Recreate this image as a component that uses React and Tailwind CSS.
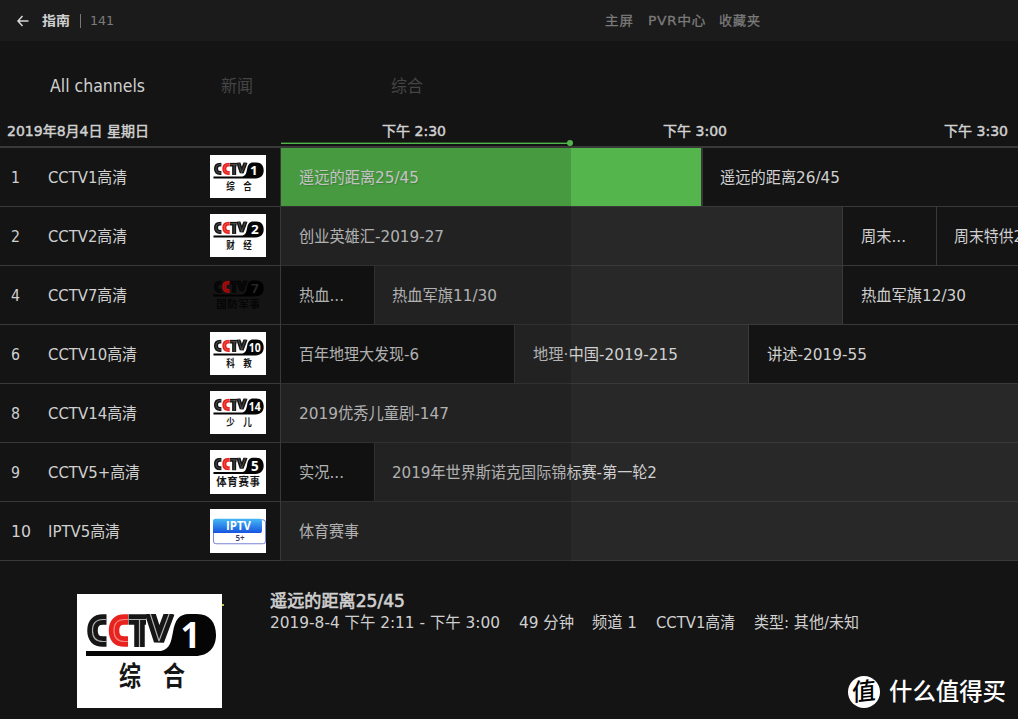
import { useLayoutEffect, useRef } from 'react';

// Text squeezed or stretched horizontally to a fixed advance width.
function Fit({ w, className = '', children }) {
  const ref = useRef(null);
  useLayoutEffect(() => {
    const el = ref.current;
    el.style.transform = `scaleX(${w / el.getBoundingClientRect().width})`;
  }, [w]);
  return (
    <span className={`block shrink-0 whitespace-nowrap ${className}`} style={{ width: w }}>
      <span ref={ref} className="inline-block origin-left">{children}</span>
    </span>
  );
}

function CctvLogo({ num, label, dark, big, className }) {
  const wide = label.length > 2;
  const two = num.length > 1;
  const ink = dark ? '#050505' : '#161616';
  const gap = dark ? '#141414' : big ? '#b0b0b0' : '#8a8a8a';
  const red = dark ? '#a80c0c' : '#e8231f';
  const c1 = 'M29.500 25.500H26Q15.500 25.500 15.500 36.500T26 47.500H29.500';
  const c2 = 'M51 25.500H47.500Q37 25.500 37 36.500T47.500 47.500H51';
  const tv = 'M51.500 25.500H69M62.500 25.500V53M73 19L82 47L92.500 19';
  return (
    <svg viewBox="0 0 145 114" preserveAspectRatio="none" className={className}>
      <defs>
        <clipPath id="letters"><rect x="8" y="20" width="90" height="33" /></clipPath>
      </defs>
      {!dark && <rect width="145" height="114" fill="#fff" />}
      <g clipPath="url(#letters)" fill="none" strokeWidth="10.500" strokeLinejoin="bevel">
        <path d={c1} stroke={ink} />
        <path d={tv} stroke={ink} />
        <path d={c2} stroke={red} />
        <g strokeWidth="1.200">
          <path d={c1} stroke={gap} />
          <path d={tv} stroke={gap} />
          <path d={c2} stroke={dark ? '#5c0808' : '#f58480'} />
        </g>
      </g>
      <path d="M9 57H84C93 55 94 48 96 38C98 26 102 20 112 20H120C133 20 139 29 139 41S132 62 118 62H9Z" fill={dark ? '#000' : '#050505'} />
      <text x={two ? 116 : num === '1' ? 113.5 : 116} y="54" textAnchor="middle" fill={dark ? '#252525' : '#fff'} fontSize={two ? 32 : 35} fontWeight="700" fontFamily="Open Sans, sans-serif" textLength={two ? 31 : 20} lengthAdjust="spacingAndGlyphs">{num}</text>
      {label.split('').map((ch, i) => (
        <text key={i} x={wide ? 30 + i * 28.5 : 53 + i * 44} y="92" textAnchor="middle" fill={ink} fontSize={wide ? 28 : 27} textLength={wide ? 27 : 22} lengthAdjust="spacingAndGlyphs" fontWeight="700" fontFamily="Noto Sans CJK SC, sans-serif">{ch}</text>
      ))}
    </svg>
  );
}

function IptvLogo({ className }) {
  return (
    <svg viewBox="0 0 56 43" preserveAspectRatio="none" className={className}>
      <defs>
        <linearGradient id="iptv" x1="0" y1="0" x2="0" y2="1">
          <stop offset="0" stopColor="#45b8f5" />
          <stop offset="1" stopColor="#1653e0" />
        </linearGradient>
      </defs>
      <rect width="56" height="43" fill="#fff" />
      <rect x="3.500" y="10.500" width="52" height="23.500" rx="3" fill="#fff" stroke="#7b87d8" />
      <path d="M5 9.500H50Q52 9.500 52 12V21Q52 23.500 49.500 23.500H3V12Q3 9.500 5 9.500Z" fill="url(#iptv)" />
      <text x="28.500" y="21" textAnchor="middle" fontSize="11.500" fontWeight="700" fill="#fff" fontFamily="Open Sans, sans-serif" textLength="25" lengthAdjust="spacingAndGlyphs">IPTV</text>
      <text x="30" y="31.500" textAnchor="middle" fontSize="8" fontWeight="600" fill="#36365e" fontFamily="Open Sans, sans-serif">5+</text>
    </svg>
  );
}

const rows = [
  { n: '1', nw: 9, name: 'CCTV1高清', w: 79, logo: ['1', '综合'], cells: [
    { w: 420, t: '遥远的距离25/45', tw: 120, on: 'green' }, { w: 317, t: '遥远的距离26/45', tw: 120, thick: true }] },
  { n: '2', nw: 9, name: 'CCTV2高清', w: 79, logo: ['2', '财经'], cells: [
    { w: 561, t: '创业英雄汇-2019-27', tw: 145, on: 'gray' }, { w: 94, t: '周末...', tw: 45 }, { w: 82, t: '周末特供2', tw: 69, shift: true }] },
  { n: '4', nw: 9, name: 'CCTV7高清', w: 79, logo: ['7', '国防军事'], dark: true, cells: [
    { w: 93, t: '热血...', tw: 45 }, { w: 468, t: '热血军旗11/30', tw: 105, on: 'gray', shift: true }, { w: 176, t: '热血军旗12/30', tw: 105 }] },
  { n: '6', nw: 9, name: 'CCTV10高清', w: 89, logo: ['10', '科教'], cells: [
    { w: 233, t: '百年地理大发现-6', tw: 120 }, { w: 234, t: '地理·中国-2019-215', tw: 145, on: 'gray' }, { w: 270, t: '讲述-2019-55', tw: 100 }] },
  { n: '8', nw: 9, name: 'CCTV14高清', w: 89, logo: ['14', '少儿'], cells: [
    { w: 737, t: '2019优秀儿童剧-147', tw: 150, on: 'gray' }] },
  { n: '9', nw: 9, name: 'CCTV5+高清', w: 92, logo: ['5', '体育赛事'], cells: [
    { w: 93, t: '实况...', tw: 45 }, { w: 644, t: '2019年世界斯诺克国际锦标赛-第一轮2', tw: 265, on: 'gray', shift: true }] },
  { n: '10', nw: 20, name: 'IPTV5高清', w: 72, logo: null, cells: [
    { w: 737, t: '体育赛事', tw: 60, on: 'gray' }] },
];

function Cell({ cell, first }) {
  const bg = cell.on === 'green' ? 'bg-[#54b54c]' : cell.on === 'gray' ? 'bg-[#282828]' : 'bg-[#141414]';
  const pad = first || !(cell.thick || cell.shift) ? 'pl-[18px]' : 'pl-[17px]';
  const line = first ? '' : cell.thick ? 'border-l-2 border-[#363636]' : 'border-l border-[#393939]';
  const text = cell.on === 'green' ? 'text-[#e6e6e6] [text-shadow:1px_1px_1px_#38783480]' : '';
  return (
    <div className={`flex h-full shrink-0 items-center overflow-hidden pt-[2px] ${bg} ${pad} ${line} ${text}`} style={{ width: cell.w }}>
      <Fit w={cell.tw}>{cell.t}</Fit>
    </div>
  );
}

export default function App() {
  return (
    <div className="flex h-[719px] w-[1018px] flex-col overflow-hidden bg-[#141414] font-['DejaVu_Sans','Noto_Sans_CJK_SC',sans-serif] text-[#d0d0d0]">
      <header className="flex h-[41px] shrink-0 items-center bg-[#1b1b1b] pl-[17px] text-[13px] leading-[20px]">
        <svg viewBox="0 0 12 12" className="h-3 w-3" fill="none" stroke="#d8d8d8" strokeWidth="1.500">
          <path d="M11.500 6H1M5.500 1L1 6L5.500 11" />
        </svg>
        <Fit w={28} className="ml-[13px] mt-px font-bold">指南</Fit>
        <span className="ml-[10px] mt-px h-[14px] w-px bg-[#777]" />
        <Fit w={24} className="ml-[9px] mt-px text-[#7c7c7c]">141</Fit>
        <nav className="ml-[491px] mt-px flex gap-[14px] text-[#7a7a7a] [-webkit-text-stroke:0.3px_#7a7a7a]">
          <Fit w={29}><span className="tracking-[1px]">主屏</span></Fit>
          <Fit w={58}><span className="tracking-[0.500px]">PVR中心</span></Fit>
          <Fit w={42} className="-ml-px"><span className="tracking-[1px]">收藏夹</span></Fit>
        </nav>
      </header>

      <div className="flex h-[76px] shrink-0 items-center pl-[50px] pt-[14px] text-[17.500px] leading-[24px]">
        <Fit w={95}>All channels</Fit>
        <Fit w={32} className="ml-[76px] text-[#444]">新闻</Fit>
        <Fit w={32} className="ml-[138px] text-[#444]">综合</Fit>
      </div>

      <div className="relative flex h-[31px] shrink-0 items-center border-b-2 border-[#393939] pb-[2px] pl-[7px] text-[13.500px] leading-[20px] [-webkit-text-stroke:0.450px_#d0d0d0]">
        <Fit w={142}>2019年8月4日 星期日</Fit>
        <Fit w={64} className="ml-[233px]">下午 2:30</Fit>
        <Fit w={64} className="ml-[217px]">下午 3:00</Fit>
        <Fit w={64} className="ml-[217px]">下午 3:30</Fit>
        <span className="absolute left-[281px] top-[25px] h-[2px] w-[289px] border-t border-[#285526] bg-[#54b54c]" />
        <span className="absolute left-[567px] top-[23px] h-[6px] w-[6px] rounded-full bg-[#54b54c]" />
      </div>

      <main className="relative shrink-0 text-[16px] leading-[24px]">
        {rows.map((r) => (
          <section key={r.n} className="flex h-[59px] border-b border-[#393939]">
            <div className="flex w-[281px] shrink-0 items-start border-r border-[#393939] pl-[11px] pt-[7px]">
              <Fit w={r.nw} className="mt-[11px]">{r.n}</Fit>
              <div className="flex flex-1 items-start justify-between pr-[14px]" style={{ paddingLeft: 37 - r.nw }}>
                <Fit w={r.w} className="mt-[11px]">{r.name}</Fit>
                {r.logo
                  ? <CctvLogo num={r.logo[0]} label={r.logo[1]} dark={r.dark} className={r.n === '9' ? 'h-[44px] w-[56px] shrink-0' : 'h-[43px] w-[56px] shrink-0'} />
                  : <IptvLogo className="h-[44px] w-[56px] shrink-0" />}
              </div>
            </div>
            <div className="flex min-w-0 flex-1 overflow-hidden">
              {r.cells.map((c, i) => <Cell key={i} cell={c} first={i === 0} />)}
            </div>
          </section>
        ))}
        <div className="absolute left-[281px] top-0 h-full w-[290px] bg-black/15" />
      </main>

      <footer className="relative flex h-[158px] shrink-0 items-start pl-[77px] pt-[33px]">
        <CctvLogo big num="1" label="综合" className="h-[114px] w-[145px] shrink-0" />
        <span className="absolute left-[222px] top-[43px] h-[2px] w-[2px] bg-[#b9b93c]" />
        <div className="ml-[48px] flex flex-col text-[16px] leading-[22px]">
          <Fit w={135} className="-mt-[4px] text-[17px] [-webkit-text-stroke:0.600px_#d0d0d0]">遥远的距离25/45</Fit>
          <div className="flex">
            <Fit w={230}>2019-8-4 下午 2:11 - 下午 3:00</Fit>
            <Fit w={55} className="ml-[19px]">49 分钟</Fit>
            <Fit w={45} className="ml-[18px]">频道 1</Fit>
            <Fit w={79} className="ml-[19px]">CCTV1高清</Fit>
            <Fit w={105} className="ml-[19px]">类型: 其他/未知</Fit>
          </div>
        </div>
        <div className="absolute left-[848px] top-[115px] flex items-center gap-[9px] text-white">
          <span className="flex h-8 w-8 items-center justify-center rounded-full bg-white text-[24px] font-medium leading-none text-black">
            <span className="block -skew-x-6 -rotate-6">值</span>
          </span>
          <Fit w={117} className="text-[24px] font-medium leading-[32px]">什么值得买</Fit>
        </div>
      </footer>
    </div>
  );
}
